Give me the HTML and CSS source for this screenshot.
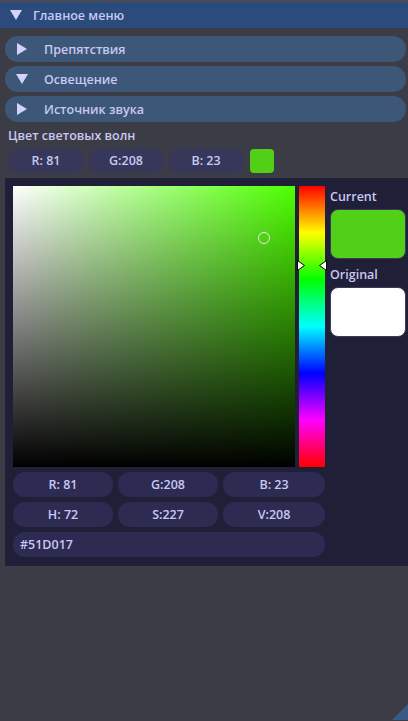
FILE: index.html
```html
<!DOCTYPE html>
<html>
<head>
<meta charset="utf-8">
<link rel="stylesheet" href="styles.css">
</head>
<body>
<div class="topline"></div>
<div class="titlebar">
  <svg class="tri-down-title" width="12" height="10" viewBox="0 0 12 10"><polygon points="0,0 12,0 6,10" fill="#d2d2fa"/></svg>
  <span>Главное меню</span>
</div>
<div class="content">
  <div class="header">
    <svg class="tri" width="12" height="12" viewBox="0 0 12 12"><polygon points="1,0 11,6 1,12" fill="#d2d2fa"/></svg>
    <span>Препятствия</span>
  </div>
  <div class="header">
    <svg class="tri" width="12" height="12" viewBox="0 0 12 12"><polygon points="0,1 12,1 6,11" fill="#d2d2fa"/></svg>
    <span>Освещение</span>
  </div>
  <div class="header">
    <svg class="tri" width="12" height="12" viewBox="0 0 12 12"><polygon points="1,0 11,6 1,12" fill="#d2d2fa"/></svg>
    <span>Источник звука</span>
  </div>
  <div class="label">Цвет световых волн</div>
  <div class="rgbrow">
    <div class="btn">R: 81</div>
    <div class="btn">G:208</div>
    <div class="btn">B: 23</div>
    <div class="swatch-small"></div>
  </div>
</div>
<div class="popup">
  <div class="picker">
    <div class="sv">
      <div class="sv-white"></div>
      <div class="sv-black"></div>
      <div class="marker"></div>
    </div>
    <div class="hue">
      <svg class="arrow arrow-l" width="9" height="11" viewBox="0 0 9 11"><polygon points="0.5,0.5 7.5,5.5 0.5,10.5" fill="#fff" stroke="#000" stroke-width="1"/></svg>
      <svg class="arrow arrow-r" width="9" height="11" viewBox="0 0 9 11"><polygon points="8.5,0.5 1.5,5.5 8.5,10.5" fill="#fff" stroke="#000" stroke-width="1"/></svg>
    </div>
    <div class="side">
      <div class="side-label">Current</div>
      <div class="big-swatch current"></div>
      <div class="side-label second">Original</div>
      <div class="big-swatch original"></div>
    </div>
  </div>
  <div class="inputs">
    <div class="ibtn">R: 81</div>
    <div class="ibtn">G:208</div>
    <div class="ibtn">B: 23</div>
    <div class="ibtn">H: 72</div>
    <div class="ibtn">S:227</div>
    <div class="ibtn">V:208</div>
    <div class="ibtn hex">#51D017</div>
  </div>
</div>
<svg class="grip" width="16" height="16" viewBox="0 0 16 16"><polygon points="16,0 16,16 0,16" fill="#3c5a88"/></svg>
</body>
</html>
```
FILE: styles.css
```css
html, body {
  margin: 0;
  padding: 0;
}
body {
  width: 408px;
  height: 721px;
  background: #3c3c46;
  font-family: "Open Sans", "Noto Sans", sans-serif;
  font-weight: 600;
  font-size: 12.5px;
  color: #c8c8f4;
  position: relative;
  overflow: hidden;
}
.topline {
  height: 2px;
  background: #4d4b50;
}
.titlebar {
  height: 26px;
  background: #2a4b7b;
  display: flex;
  align-items: center;
  padding-left: 10px;
}
.tri-down-title {
  margin-right: 11px;
  margin-top: -1px;
}
.content {
  padding: 8px 2px 0 5px;
  display: flex;
  flex-direction: column;
}
.header {
  height: 26px;
  background: #3d5779;
  border-radius: 13px;
  display: flex;
  align-items: center;
  padding-left: 11px;
  margin-bottom: 4px;
}
.header .tri {
  margin-right: 16px;
}
.label {
  margin-top: 0;
  padding-left: 3px;
  height: 20px;
  line-height: 20px;
}
.rgbrow {
  display: flex;
  align-items: center;
  padding-left: 3px;
  margin-top: 2px;
  height: 25px;
}
.btn {
  width: 76px;
  height: 25px;
  background: #373759;
  border-radius: 12px;
  display: flex;
  align-items: center;
  justify-content: center;
  margin-right: 4px;
}
.swatch-small {
  width: 24px;
  height: 24px;
  border-radius: 4px;
  background: #51d017;
  margin-left: 2px;
}
.popup {
  margin: 5px 0 0 5px;
  background: #1f1f37;
  padding: 8px 2px 9px 8px;
  height: 371px;
}
.picker {
  display: flex;
  align-items: flex-start;
}
.sv {
  position: relative;
  width: 282px;
  height: 281px;
  background: rgb(78, 255, 0);
}
.sv-white {
  position: absolute;
  inset: 0;
  background: linear-gradient(to right, #fff, rgba(255,255,255,0));
}
.sv-black {
  position: absolute;
  inset: 0;
  background: linear-gradient(to bottom, rgba(0,0,0,0), #000);
}
.marker {
  position: absolute;
  left: 245px;
  top: 46px;
  width: 10px;
  height: 10px;
  border: 1.2px solid #e8e8e8;
  border-radius: 50%;
}
.hue {
  position: relative;
  width: 26px;
  height: 281px;
  margin-left: 4px;
  background: linear-gradient(to bottom, #f00 0%, #ff0 16.67%, #0f0 33.33%, #0ff 50%, #00f 66.67%, #f0f 83.33%, #f00 100%);
}
.arrow {
  position: absolute;
  top: 74px;
}
.arrow-l {
  left: -2px;
}
.arrow-r {
  right: -2px;
}
.side {
  margin-left: 5px;
  width: 76px;
  display: flex;
  flex-direction: column;
}
.side-label {
  height: 19px;
  line-height: 19px;
  margin-top: 1px;
}
.side-label.second {
  margin-top: 6px;
  height: 19px;
}
.big-swatch {
  height: 50px;
  border-radius: 8px;
  margin-top: 3px;
  box-sizing: border-box;
  border: 1px solid #3a3a5e;
}
.current {
  background: #51d017;
}
.original {
  background: #ffffff;
}
.inputs {
  margin-top: 5px;
  width: 312px;
  display: grid;
  grid-template-columns: 100px 100px 102px;
  column-gap: 5px;
  row-gap: 5px;
}
.ibtn {
  height: 25px;
  background: #2d2b52;
  border-radius: 12px;
  display: flex;
  align-items: center;
  justify-content: center;
}
.ibtn.hex {
  grid-column: 1 / 4;
  justify-content: flex-start;
  padding-left: 7px;
}
.grip {
  position: absolute;
  right: 0;
  bottom: 1px;
}
```
